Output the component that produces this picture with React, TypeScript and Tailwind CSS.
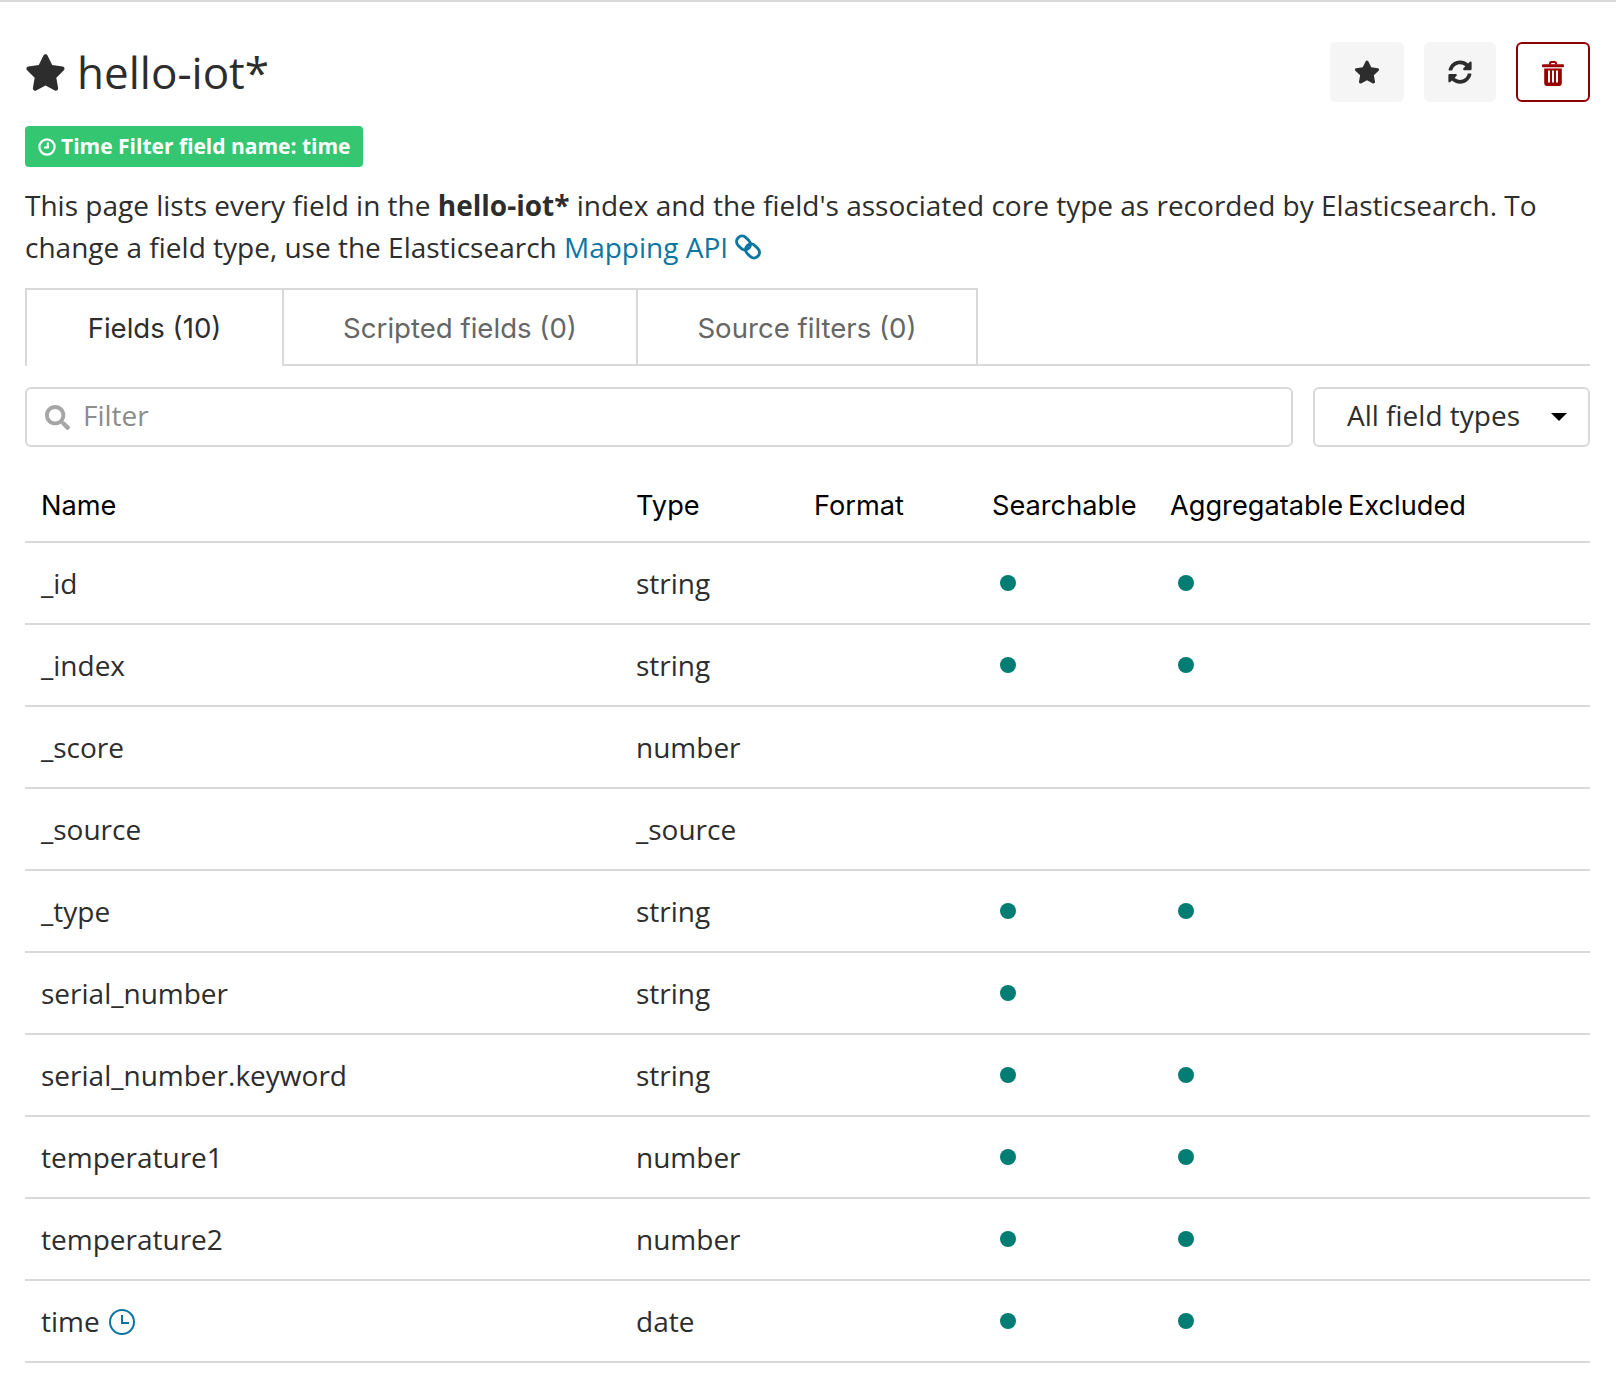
import React from 'react';
import { FaStar, FaSyncAlt, FaSearch } from 'react-icons/fa';

const fields = [
  { name: '_id', type: 'string', searchable: true, aggregatable: true },
  { name: '_index', type: 'string', searchable: true, aggregatable: true },
  { name: '_score', type: 'number', searchable: false, aggregatable: false },
  { name: '_source', type: '_source', searchable: false, aggregatable: false },
  { name: '_type', type: 'string', searchable: true, aggregatable: true },
  { name: 'serial_number', type: 'string', searchable: true, aggregatable: false },
  { name: 'serial_number.keyword', type: 'string', searchable: true, aggregatable: true },
  { name: 'temperature1', type: 'number', searchable: true, aggregatable: true },
  { name: 'temperature2', type: 'number', searchable: true, aggregatable: true },
  { name: 'time', type: 'date', searchable: true, aggregatable: true },
];

const Dot = () => <span className="block w-4 h-4 rounded-full bg-[#017d73] ml-[8px]" />;

const LinkIcon = () => (
  <svg viewBox="0 0 26 26" className="inline w-[26px] h-[26px] align-[-2px]" fill="none" stroke="currentColor" strokeWidth="3">
    <rect x="1" y="3.5" width="15" height="11" rx="5.5" transform="rotate(45 8.5 9)" />
    <rect x="10" y="11.5" width="15" height="11" rx="5.5" transform="rotate(45 17.5 17)" />
  </svg>
);

const TrashIcon = () => (
  <svg viewBox="0 0 22 25" className="w-[22px] h-[25px] mt-[2px] text-[#9a0000]" fill="currentColor">
    <path d="M7 3.5V2.2C7 1 8 0 9.2 0h3.6C14 0 15 1 15 2.2v1.3h-2V2.4c0-.3-.2-.5-.5-.5h-3c-.3 0-.5.2-.5.5v1.1z" />
    <rect x="0" y="3.2" width="22" height="3" rx="1" />
    <path fillRule="evenodd" d="M2.2 7.4h17.6v14.8c0 1.5-1.2 2.8-2.6 2.8H4.8c-1.4 0-2.6-1.3-2.6-2.8zM6 9.5v12h2v-12zm4 0v12h2v-12zm4 0v12h2v-12z" />
  </svg>
);

const App: React.FC = () => {
  return (
    <div className="w-[1616px] h-[1388px] bg-white border-t-2 border-[#d9d9d9] px-[25px] pr-[26px] text-[#2d2d2d] font-['Open_Sans',sans-serif]">
      {/* Header */}
      <div className="flex items-start justify-between pt-[40px] h-[124px]">
        <h1 className="flex items-center gap-[11px] text-[44px] leading-[60px] font-normal">
          <FaStar className="w-[41px] h-[41px]" />
          hello-iot*
        </h1>
        <div className="flex gap-[20px]">
          <button className="w-[74px] h-[60px] rounded-[6px] bg-[#f5f5f5] flex items-center justify-center">
            <FaStar className="w-[26px] h-[26px]" />
          </button>
          <button className="w-[72px] h-[60px] rounded-[6px] bg-[#f5f5f5] flex items-center justify-center">
            <FaSyncAlt className="w-[24px] h-[24px]" />
          </button>
          <button className="w-[74px] h-[60px] rounded-[6px] border-2 border-[#8f0000] flex items-center justify-center">
            <TrashIcon />
          </button>
        </div>
      </div>

      {/* Time field badge */}
      <div className="inline-flex items-center gap-[5px] h-[41px] pl-[13px] pr-[12px] rounded-[4px] bg-[#34c671] text-white text-[21px] font-bold">
        <svg viewBox="0 0 18 18" className="w-[18px] h-[18px]" fill="none" stroke="currentColor" strokeWidth="2.2">
          <circle cx="9" cy="9" r="7.6" />
          <path d="M9.8 4.5v5H6" />
        </svg>
        <span>Time Filter field name: time</span>
      </div>

      <p className="mt-[17px] text-[28px] leading-[42px]">
        This page lists every field in the <strong>hello-iot*</strong> index and the field's associated core type as recorded by Elasticsearch. To change a field type, use the Elasticsearch{' '}
        <a className="text-[#0d76a0]">
          Mapping API <LinkIcon />
        </a>
      </p>

      {/* Tabs */}
      <div className="flex mt-[20px] h-[78px] border-b-2 border-[#d9d9d9] font-['Inter',sans-serif] text-[27.6px] text-[#666666]">
        <div className="w-[259px] h-[78px] pt-[2px] flex items-center justify-center border-l-2 border-t-2 border-r-2 border-[#d9d9d9] bg-white text-[#2d2d2d]">Fields (10)</div>
        <div className="w-[354px] pt-[3px] flex items-center justify-center border-t-2 border-r-2 border-[#d9d9d9]">Scripted fields (0)</div>
        <div className="w-[340px] pt-[3px] flex items-center justify-center border-t-2 border-r-2 border-[#d9d9d9]">Source filters (0)</div>
      </div>

      {/* Filter row */}
      <div className="flex gap-[20px] mt-[21px]">
        <div className="flex-1 h-[60px] flex items-center gap-[12px] px-[18px] rounded-[6px] border-2 border-[#d9d9d9]">
          <FaSearch className="w-[25px] h-[25px] text-[#a6a6a6]" />
          <span className="text-[28px] text-[#8c8c8c] -mt-[4px] ml-[1px]">Filter</span>
        </div>
        <div className="w-[277px] h-[60px] flex items-center justify-between pl-[32px] pr-[21px] rounded-[6px] border-2 border-[#d9d9d9] text-[28px]">
          <span className="-mt-[4px]">All field types</span>
          <span className="w-0 h-0 border-x-[8px] border-x-transparent border-t-[8px] border-t-black" />
        </div>
      </div>

      {/* Fields table */}
      <table className="w-full mt-[13px] table-fixed text-left">
        <thead className="font-['Inter',sans-serif] text-[27.2px] text-black">
          <tr className="h-[82px] border-b-2 border-[#d9d9d9]">
            <th className="w-[595px] pl-[16px] pt-[12px] font-normal">Name</th>
            <th className="w-[178px] pl-[16px] pt-[12px] font-normal">Type</th>
            <th className="w-[178px] pl-[16px] pt-[12px] font-normal">Format</th>
            <th className="w-[178px] pl-[16px] pt-[12px] font-normal">Searchable</th>
            <th className="w-[178px] pl-[16px] pt-[12px] font-normal whitespace-nowrap">Aggregatable</th>
            <th className="pl-[16px] pt-[12px] font-normal">Excluded</th>
          </tr>
        </thead>
        <tbody className="text-[28px]">
          {fields.map((f) => (
            <tr key={f.name} className="h-[82px] border-b-2 border-[#d9d9d9]">
              <td className="pl-[16px]">
                <span className="inline-flex items-center gap-[9px]">
                  {f.name}
                  {f.name === 'time' && (
                    <svg viewBox="0 0 26 26" className="w-[26px] h-[26px] text-[#0d76a0] mt-[2px]" fill="none" stroke="currentColor" strokeWidth="2">
                      <circle cx="13" cy="13" r="12" />
                      <path d="M13 6v8h7" />
                    </svg>
                  )}
                </span>
              </td>
              <td className="pl-[16px]">{f.type}</td>
              <td className="pl-[16px]" />
              <td className="pl-[16px]">{f.searchable && <Dot />}</td>
              <td className="pl-[16px]">{f.aggregatable && <Dot />}</td>
              <td className="pl-[16px]" />
            </tr>
          ))}
        </tbody>
      </table>
    </div>
  );
};

export default App;
